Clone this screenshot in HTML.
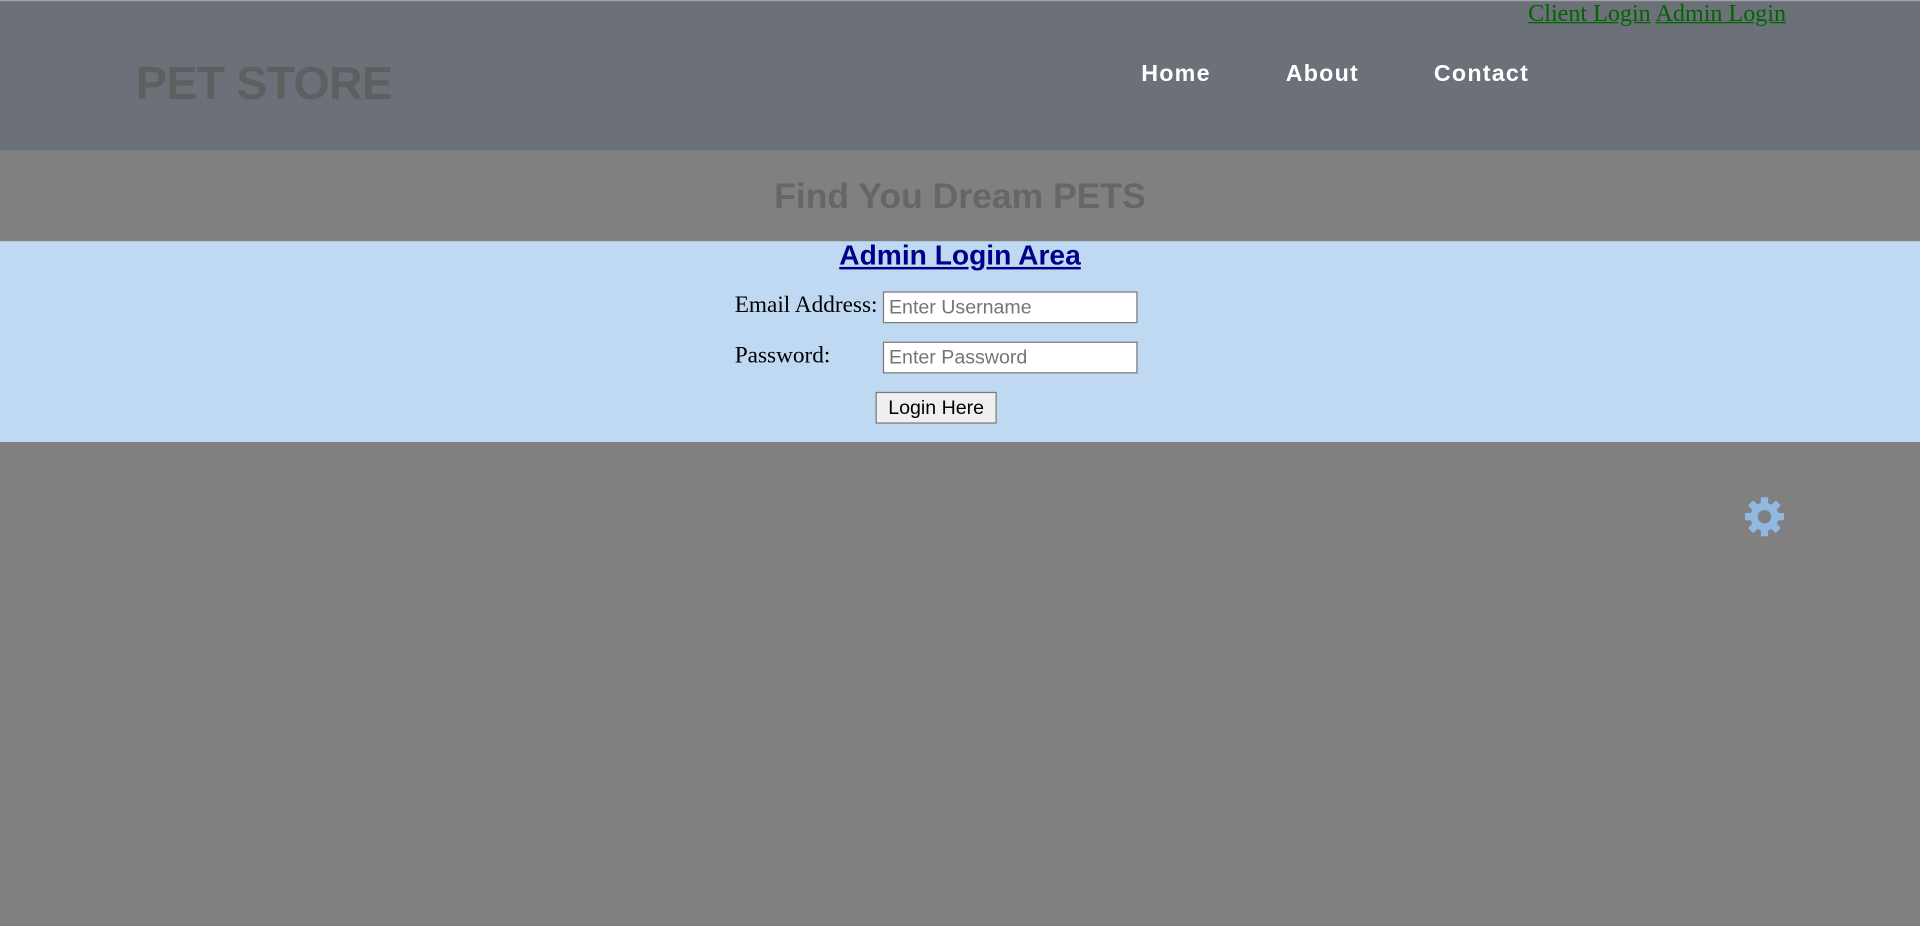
<!DOCTYPE html>
<html><head><meta charset="utf-8"><style>
html,body{margin:0;padding:0;width:1920px;height:926px;overflow:hidden;background:#808080}
#w{position:absolute;left:0;top:0;width:1568px;height:756px;transform:scale(1.22449);transform-origin:0 0;font-family:"Liberation Sans",sans-serif}
.a{position:absolute;white-space:nowrap}
#hdr{position:absolute;left:0;top:0;width:1568px;height:123px;background:#6c7079;border-top:1px solid #a0a3a8;box-sizing:border-box}
#band{position:absolute;left:0;top:123px;width:1568px;height:74px;background:#808080}
#blue{position:absolute;left:0;top:197px;width:1568px;height:164px;background:#bfd9f2}
.nav{color:#fff;font-size:19px;font-weight:bold;letter-spacing:1px;top:50px}
.tl{font-family:"Liberation Serif",serif;font-size:19.7px;color:#006400;text-decoration:underline;top:0px}
.lbl{font-family:"Liberation Serif",serif;font-size:19px;color:#000}
.inp{position:absolute;left:721px;background:#fff;border:1px solid #767676;font-size:16px;color:#757575;line-height:24px;padding-left:4px;box-sizing:border-box;width:208px;height:26px}
</style></head><body><div id="w">
<div id="hdr"></div>
<div class="a tl" style="left:1248px">Client Login</div>
<div class="a tl" style="left:1352px">Admin Login</div>
<div class="a" style="left:111px;top:48px;font-size:38px;font-weight:bold;color:#5e5f61;letter-spacing:-0.6px">PET STORE</div>
<div class="a nav" style="left:932px">Home</div>
<div class="a nav" style="left:1050px">About</div>
<div class="a nav" style="left:1171px">Contact</div>
<div id="band"></div>
<div class="a" style="left:0;width:1568px;text-align:center;top:145px;font-size:29px;font-weight:bold;color:#666">Find You Dream PETS</div>
<div id="blue"></div>
<div class="a" style="left:0;width:1568px;text-align:center;top:195px;font-size:23px;font-weight:bold;color:#00008b;text-decoration:underline">Admin Login Area</div>
<div class="a lbl" style="left:600px;top:239px">Email Address:</div>
<div class="inp" style="top:238px;line-height:26px">Enter Username</div>
<div class="a lbl" style="left:600px;top:280px">Password:</div>
<div class="inp" style="top:279px;line-height:26px">Enter Password</div>
<div class="a" style="left:715px;top:320px;width:99px;height:26px;box-sizing:border-box;border:1px solid #767676;background:#efefef;font-size:16px;text-align:center;line-height:26px;color:#000">Login Here</div>
<svg class="a" style="left:1425px;top:406px" width="32" height="32" viewBox="-16 -16 32 32">
<g fill="#90b8e0">
<circle r="11.5"/>
<g id="t"><rect x="-3" y="-16" width="6" height="7" rx="1"/></g>
<use href="#t" transform="rotate(45)"/><use href="#t" transform="rotate(90)"/><use href="#t" transform="rotate(135)"/><use href="#t" transform="rotate(180)"/><use href="#t" transform="rotate(225)"/><use href="#t" transform="rotate(270)"/><use href="#t" transform="rotate(315)"/>
</g>
<circle r="5.5" fill="#808080"/>
</svg>
</div></body></html>
